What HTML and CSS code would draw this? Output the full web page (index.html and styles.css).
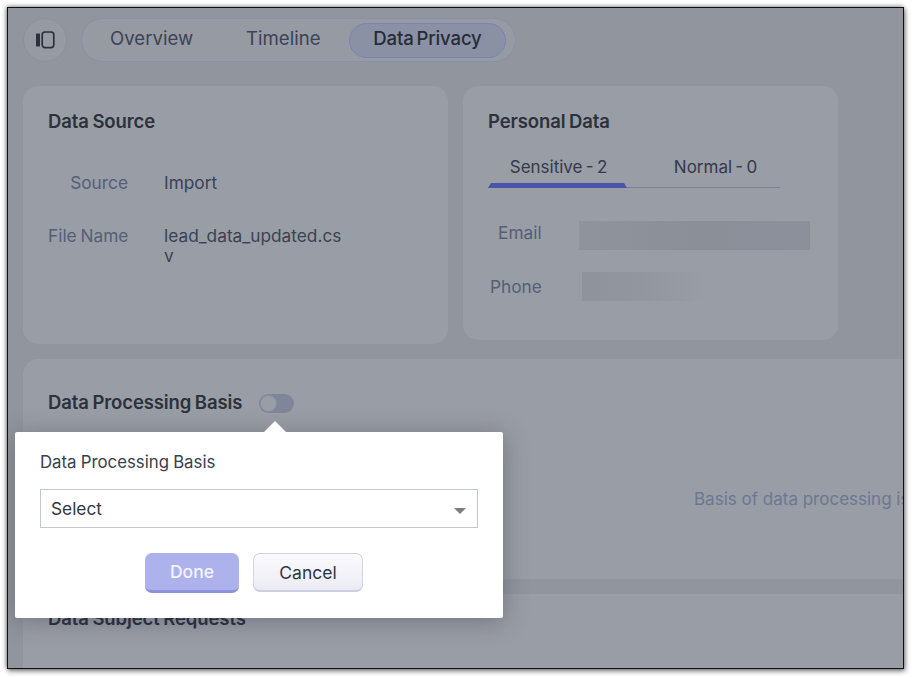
FILE: index.html
```html
<!DOCTYPE html>
<html lang="en">
<head>
<meta charset="utf-8">
<title>Data Privacy</title>
<link rel="stylesheet" href="styles.css">
</head>
<body>
<div class="frame">
  <header class="topbar">
    <button class="icon-btn" aria-label="Toggle panel">
      <svg width="20" height="18" viewBox="0 0 20 18"><rect x="1" y="2.4" width="4" height="13" rx="0.6" fill="#2c313c"/><rect x="7.2" y="1" width="11.6" height="15.6" rx="2.8" fill="none" stroke="#2c313c" stroke-width="1.7"/></svg>
    </button>
    <nav class="tabs">
      <span class="tab tab-overview">Overview</span>
      <span class="tab tab-timeline">Timeline</span>
      <span class="tab tab-active">Data Privacy</span>
    </nav>
  </header>

  <section class="row">
    <div class="card card-source">
      <h2 class="title">Data Source</h2>
      <dl class="facts">
        <dt>Source</dt><dd>Import</dd>
        <dt>File Name</dt><dd>lead_data_updated.csv</dd>
      </dl>
    </div>
    <div class="card card-personal">
      <h2 class="title">Personal Data</h2>
      <div class="subtabs">
        <span class="subtab subtab-on">Sensitive - 2</span>
        <span class="subtab">Normal - 0</span>
      </div>
      <div class="pd-row pd-email"><span class="pd-label">Email</span><span class="mask mask-email"></span></div>
      <div class="pd-row pd-phone"><span class="pd-label">Phone</span><span class="mask mask-phone"></span></div>
    </div>
  </section>

  <section class="card card-basis">
    <div class="basis-head">
      <h2 class="title">Data Processing Basis</h2>
      <span class="toggle"><span class="knob"></span></span>
    </div>
    <p class="basis-msg">Basis of data processing is not selected</p>
  </section>

  <section class="card card-requests">
    <h2 class="title">Data Subject Requests</h2>
  </section>

  <div class="popup">
    <span class="popup-arrow"></span>
    <div class="popup-label">Data Processing Basis</div>
    <div class="select"><span>Select</span><span class="caret"></span></div>
    <div class="actions">
      <button class="btn btn-done">Done</button>
      <button class="btn btn-cancel">Cancel</button>
    </div>
  </div>
</div>
</body>
</html>
```

FILE: styles.css
```css
* { box-sizing: border-box; }
html, body { margin: 0; height: 100%; background: #fff; }
body { padding: 7px 8px 8px 7px; font-family: Inter, "Liberation Sans", sans-serif; overflow: hidden; }

.frame {
  position: relative;
  width: 897px;
  height: 662px;
  border: 1px solid #111;
  background: #91959e;
  overflow: hidden;
  padding: 10px 0 0 15px;
  box-shadow: 1px 2px 5px rgba(0,0,0,.55), -1px -1px 4px rgba(0,0,0,.35);
}

.topbar { display: flex; align-items: center; gap: 14px; height: 44px; }
.icon-btn {
  width: 44px; height: 44px; padding: 0; border-radius: 50%;
  border: 1px solid #8c909b; background: #969aa3;
  display: flex; align-items: center; justify-content: center;
}
.tabs {
  width: 435px; height: 44px; border: 1px solid #8a90a8; border-radius: 22px;
  display: flex; align-items: center; font-size: 18.6px; color: #3b4356;
  padding-left: 3px; background: #969aa3;
}
.tab { line-height: 30px; padding-bottom: 4px; }
.tab-overview { margin-left: 25px; width: 136px; }
.tab-timeline { width: 103px; }
.tab-active {
  width: 157px; height: 35px; text-align: center; border: 1px solid #7a84b4; border-radius: 18px;
  background: #8b91a5; color: #272c37; font-weight: 500; line-height: 29px;
  word-spacing: -2px; letter-spacing: -.15px;
}

.row { display: flex; align-items: flex-start; gap: 15px; margin-top: 24px; }
.card { background: #999da5; border-radius: 15px; }
.title { margin: 0; font-size: 18.5px; font-weight: 600; line-height: 22px; color: #2c313c; letter-spacing: -.1px; word-spacing: -1px; }

.card-source { width: 425px; height: 258px; padding: 24px 25px; }
.facts {
  display: grid; grid-template-columns: 80px 180px; column-gap: 36px; row-gap: 33px;
  margin: 41px 0 0; font-size: 17.3px; line-height: 20px;
}
.facts dt { text-align: right; color: #545f78; white-space: nowrap; word-spacing: -1px; }
.facts dd { margin: 0; color: #3b4253; word-break: break-all; }

.card-personal { width: 375px; height: 254px; padding: 24px 25px; }
.subtabs { display: flex; width: 292px; height: 32px; margin-top: 24px; border-bottom: 1px solid #7c8294; font-size: 17px; color: #343a49; word-spacing: -1.5px; }
.subtab { text-align: center; line-height: 23px; position: relative; }
.subtab:last-child { width: 153px; padding-left: 24px; }
.subtab-on { width: 139px; flex: none; padding-left: 2px; }
.subtab-on::after {
  content: ""; position: absolute; left: 0; right: 0; bottom: -1px; height: 5px;
  background: #4a55a8; clip-path: polygon(3px 0, calc(100% - 3px) 0, 100% 100%, 0 100%);
}
.pd-row { display: flex; align-items: flex-start; font-size: 17.3px; color: #545f78; line-height: 21px; }
.pd-email { margin-top: 33px; padding-left: 10px; }
.pd-phone { margin-top: 22px; padding-left: 2px; }
.pd-label { width: 81px; padding-top: 1px; }
.pd-phone .pd-label { width: 92px; padding-top: 4px; }
.mask { display: block; height: 29px; }
.mask-email { width: 231px; background: linear-gradient(90deg, #8f939c, #8b8f98 50%, #8c909a); }
.mask-phone { width: 126px; background: linear-gradient(90deg, #8f939c, #92969f 50%, #999da5); }

.card-basis { width: 1000px; height: 220px; margin-top: 15px; padding: 32px 25px 0; border-bottom-left-radius: 0; border-bottom-right-radius: 0; }
.basis-head { display: flex; align-items: center; gap: 17px; }
.toggle { width: 35px; height: 19px; margin-top: 2px; border-radius: 10px; background: #80869a; display: block; padding: 1px; }
.knob { display: block; width: 17px; height: 17px; border-radius: 50%; background: #999da5; border: 1px solid #8a8f9e; }
.basis-msg { margin: 76px 0 0 646px; white-space: nowrap; font-size: 17px; line-height: 21px; color: #6c7793; }

.card-requests { width: 1000px; height: 120px; margin-top: 15px; padding: 13px 25px 0; border-bottom-left-radius: 0; border-bottom-right-radius: 0; }

.popup {
  position: absolute; left: 7px; top: 424px; width: 488px; height: 186px;
  background: #fff; border-radius: 2px; padding: 20px 25px 0;
  box-shadow: 0 3px 24px rgba(40,44,56,.35);
}
.popup-arrow {
  position: absolute; left: 249px; top: -11px; width: 0; height: 0;
  border-left: 11px solid transparent; border-right: 11px solid transparent; border-bottom: 11px solid #fff;
}
.popup-label { font-size: 16.8px; line-height: 21px; color: #383e4c; word-spacing: -.5px; }
.select {
  display: flex; align-items: center; justify-content: space-between;
  height: 39px; margin-top: 16px; padding: 0 11px 0 10px; border: 1px solid #c4c6cf;
  font-size: 17.3px; color: #2f3542;
}
.caret { width: 0; height: 0; margin-top: 5px; border-left: 6px solid transparent; border-right: 6px solid transparent; border-top: 6px solid #7d7f86; }
.actions { display: flex; justify-content: center; gap: 14px; margin-top: 25px; padding-right: 10px; }
.btn { height: 39px; border-radius: 7px; font: 500 17.5px Inter, "Liberation Sans", sans-serif; padding: 0; }
.btn-done { width: 94px; height: 40px; background: #adb2ec; color: #f4f5ff; border: none; border-bottom: 3px solid #8c94dc; }
.btn-cancel { width: 110px; background: linear-gradient(#fbfbfd, #ecebf5); color: #2f3542; border: 1px solid #d3d3e2; border-bottom: 2px solid #cfcfe4; font-weight: 400; }
```
